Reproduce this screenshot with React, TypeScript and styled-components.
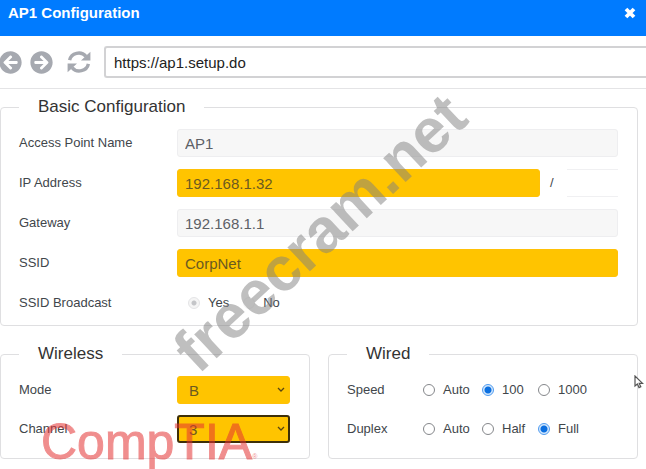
import React from "react";
import styled, { createGlobalStyle, css } from "styled-components";
import { FaArrowCircleLeft, FaArrowCircleRight } from "react-icons/fa";

const GlobalStyle = createGlobalStyle`
  *, *::before, *::after { box-sizing: border-box; }
  body {
    margin: 0;
    background: #fff;
    color: #41464b;
    font: 13px/20px "Liberation Sans", Arial, sans-serif;
  }
  button, input, select { font-family: inherit; }
`;

const Window = styled.main`
  position: relative;
  overflow: hidden;
  padding-bottom: 10px;
`;

const TitleBar = styled.header`
  display: flex;
  align-items: flex-start;
  justify-content: space-between;
  height: 36px;
  padding: 4px 10px 0 8px;
  background: #007bff;
  color: #fff;
`;

const Title = styled.h1`
  margin: 0;
  font-size: 15px;
  line-height: 18px;
`;

const IconButton = styled.button`
  display: flex;
  padding: 0;
  border: 0;
  background: none;
  color: inherit;
`;

const CloseButton = styled(IconButton)`
  padding-top: 3px;
`;

const Toolbar = styled.nav`
  display: flex;
  align-items: center;
  height: 53px;
  border-bottom: 1px solid #e4e4e6;
  color: #a6a9b0;
`;

const History = styled.div`
  display: flex;
  gap: 8px;
  margin-left: -1px;
  margin-right: 14px;
`;

const AddressInput = styled.input`
  flex: 1;
  min-width: 0;
  height: 32px;
  margin-left: 13px;
  padding: 0 8px;
  border: 2px solid #d2d2d4;
  border-right: 0;
  border-radius: 3px 0 0 3px;
  background: #fff;
  color: #222;
  font-size: 15px;
`;

const Form = styled.form`
  display: grid;
  grid-template-columns: 310fr 310fr;
  gap: 18px;
  padding: 8px 8px 0 0;
`;

const Group = styled.fieldset<{ $wide?: boolean }>`
  display: flex;
  flex-direction: column;
  gap: 11px;
  min-width: 0;
  margin: 0;
  padding: 12px 19px 15px 18px;
  border: 1px solid #dfdfe1;
  border-radius: 4px;
  ${(p) => p.$wide && css`
    grid-column: 1 / -1;
    gap: 12px;
    padding-bottom: 8px;
  `}
`;

const Legend = styled.legend`
  padding: 0 19px;
  color: #333;
  font-size: 17px;
  line-height: 20px;
`;

const Row = styled.div<{ $label?: number }>`
  display: grid;
  grid-template-columns: ${(p) => p.$label ?? 158}px minmax(0, 1fr);
  align-items: center;
  height: 28px;
`;

const Split = styled.div`
  display: grid;
  grid-template-columns: minmax(0, 1fr) 27px 51px;
  align-items: center;
`;

const Slash = styled.span`
  padding-left: 10px;
`;

const field = css<{ $changed?: boolean }>`
  width: 100%;
  height: 28px;
  border: 1px solid ${(p) => (p.$changed ? "#ffc107" : "#eeeef0")};
  border-radius: 3px;
  background: ${(p) => (p.$changed ? "#ffc400" : "#f7f7f7")};
  color: ${(p) => (p.$changed ? "#6b5a20" : "#5c6066")};
  font-size: 15px;
`;

const TextField = styled.input<{ $changed?: boolean }>`
  ${field}
  padding: 0 7px;
`;

const PrefixField = styled.input`
  width: 100%;
  height: 28px;
  border: solid #f0f0f2;
  border-width: 1px 0;
  background: #fff;
`;

const SelectBox = styled.div`
  position: relative;
  width: 113px;
`;

const SelectField = styled.select<{ $changed?: boolean; $active?: boolean }>`
  ${field}
  appearance: none;
  padding: 0 20px 0 11px;
  ${(p) => p.$active && css`
    padding-left: 10px;
    border: 2px solid #3d2f08;
  `}
`;

const Chevron = styled.svg`
  position: absolute;
  right: 5px;
  top: 11px;
  pointer-events: none;
`;

const Options = styled.div`
  display: grid;
  grid-template-columns: 59px 56px auto;
`;

const ShortOptions = styled.div`
  display: flex;
  gap: 14px;
  padding-left: 11px;
`;

const Option = styled.label`
  display: flex;
  align-items: center;
  gap: 8px;
  white-space: nowrap;
`;

const Radio = styled.input`
  appearance: none;
  flex: none;
  width: 12px;
  height: 12px;
  margin: 0;
  border: 1px solid #85878b;
  border-radius: 50%;
  background: #fff;
  &:checked {
    border-color: #4f9bf0;
    background: radial-gradient(circle, #0b6fe0 3px, #d5e8fc 4px);
  }
  &:disabled {
    border-color: #f2f2f3;
    background: #fbfbfb;
  }
  &:disabled:checked {
    border-color: #e4e4e6;
    background: radial-gradient(circle, #c4c5c8 2px, #f5f5f5 3px);
  }
`;

const Watermark = styled.div`
  position: absolute;
  left: 184px;
  top: 360px;
  color: rgba(128, 128, 128, 0.5);
  font-size: 62px;
  font-weight: bold;
  line-height: 0;
  transform: rotate(-43deg);
  transform-origin: 0 0;
  white-space: nowrap;
  pointer-events: none;
`;

const Brand = styled.div`
  position: absolute;
  left: 41px;
  top: 414px;
  color: #e53232;
  opacity: 0.55;
  font-size: 50px;
  line-height: 56px;
  -webkit-text-stroke: 1px #e53232;
  white-space: nowrap;
  pointer-events: none;
`;

const Registered = styled.small`
  font-size: 7px;
  -webkit-text-stroke: 0;
`;

const Pointer = styled.svg`
  position: absolute;
  left: 634px;
  top: 375px;
  pointer-events: none;
`;

function CloseIcon() {
  return (
    <svg width="12" height="12" viewBox="0 0 12 12" stroke="currentColor" strokeWidth="3.8" aria-hidden="true">
      <path d="M2 2l8 8M10 2l-8 8" />
    </svg>
  );
}

function RefreshIcon() {
  return (
    <svg width="24" height="24" viewBox="0 0 24 24" fill="none" aria-hidden="true">
      <path d="M2.600 10.200A9.300 8.800 0 0 1 19 6.400M21.400 13.800A9.300 8.800 0 0 1 5 17.600" stroke="currentColor" strokeWidth="3.400" />
      <path d="M23.400 1.800v8.600h-9.400zM.6 22.200v-8.600H10z" fill="currentColor" />
    </svg>
  );
}

type TextRowProps = { id: string; label: string; value: string; changed?: boolean };

function TextRow({ id, label, value, changed }: TextRowProps) {
  return (
    <Row>
      <label htmlFor={id}>{label}</label>
      <TextField id={id} defaultValue={value} $changed={changed} />
    </Row>
  );
}

type SelectRowProps = { id: string; label: string; value: string; options: string[]; active?: boolean };

function SelectRow({ id, label, value, options, active }: SelectRowProps) {
  return (
    <Row>
      <label htmlFor={id}>{label}</label>
      <SelectBox>
        <SelectField id={id} defaultValue={value} $changed $active={active}>
          {options.map((o) => (
            <option key={o}>{o}</option>
          ))}
        </SelectField>
        <Chevron width="8" height="6" viewBox="0 0 8 6" fill="none" stroke="#594612" strokeWidth="1.3">
          <path d="M1 1l3 3 3-3" />
        </Chevron>
      </SelectBox>
    </Row>
  );
}

type RadioRowProps = { name: string; label: string; value: string; options: string[] };

function RadioRow({ name, label, value, options }: RadioRowProps) {
  return (
    <Row $label={76} role="radiogroup" aria-label={label}>
      <span>{label}</span>
      <Options>
        {options.map((o) => (
          <Option key={o}>
            <Radio type="radio" name={name} value={o} defaultChecked={o === value} />
            {o}
          </Option>
        ))}
      </Options>
    </Row>
  );
}

export default function App() {
  return (
    <Window>
      <GlobalStyle />
      <TitleBar>
        <Title>AP1 Configuration</Title>
        <CloseButton type="button" aria-label="Close">
          <CloseIcon />
        </CloseButton>
      </TitleBar>
      <Toolbar>
        <History>
          <IconButton type="button" aria-label="Back">
            <FaArrowCircleLeft size={23} />
          </IconButton>
          <IconButton type="button" aria-label="Forward">
            <FaArrowCircleRight size={23} />
          </IconButton>
        </History>
        <IconButton type="button" aria-label="Reload">
          <RefreshIcon />
        </IconButton>
        <AddressInput aria-label="Address" defaultValue="https://ap1.setup.do" />
      </Toolbar>
      <Form>
        <Group $wide>
          <Legend>Basic Configuration</Legend>
          <TextRow id="name" label="Access Point Name" value="AP1" />
          <Row>
            <label htmlFor="ip">IP Address</label>
            <Split>
              <TextField id="ip" defaultValue="192.168.1.32" $changed />
              <Slash>/</Slash>
              <PrefixField aria-label="Prefix length" />
            </Split>
          </Row>
          <TextRow id="gateway" label="Gateway" value="192.168.1.1" />
          <TextRow id="ssid" label="SSID" value="CorpNet" changed />
          <Row role="radiogroup" aria-label="SSID Broadcast">
            <span>SSID Broadcast</span>
            <ShortOptions>
              <Option>
                <Radio type="radio" name="broadcast" defaultChecked disabled />
                Yes
              </Option>
              <Option>
                <Radio type="radio" name="broadcast" disabled />
                No
              </Option>
            </ShortOptions>
          </Row>
        </Group>
        <Group>
          <Legend>Wireless</Legend>
          <SelectRow id="mode" label="Mode" value="B" options={["A", "B", "G"]} />
          <SelectRow id="channel" label="Channel" value="3" options={["1", "2", "3", "4"]} active />
        </Group>
        <Group>
          <Legend>Wired</Legend>
          <RadioRow name="speed" label="Speed" value="100" options={["Auto", "100", "1000"]} />
          <RadioRow name="duplex" label="Duplex" value="Full" options={["Auto", "Half", "Full"]} />
        </Group>
      </Form>
      <Watermark>freecram.net</Watermark>
      <Brand>
        CompTIA<Registered>®</Registered>
      </Brand>
      <Pointer width="10" height="14" viewBox="0 0 10 14" fill="#fff" stroke="#555" strokeWidth="1.2">
        <path d="M1 1v10l2.4-2 1.6 3.6 1.8-.8-1.6-3.4H8.600z" />
      </Pointer>
    </Window>
  );
}
